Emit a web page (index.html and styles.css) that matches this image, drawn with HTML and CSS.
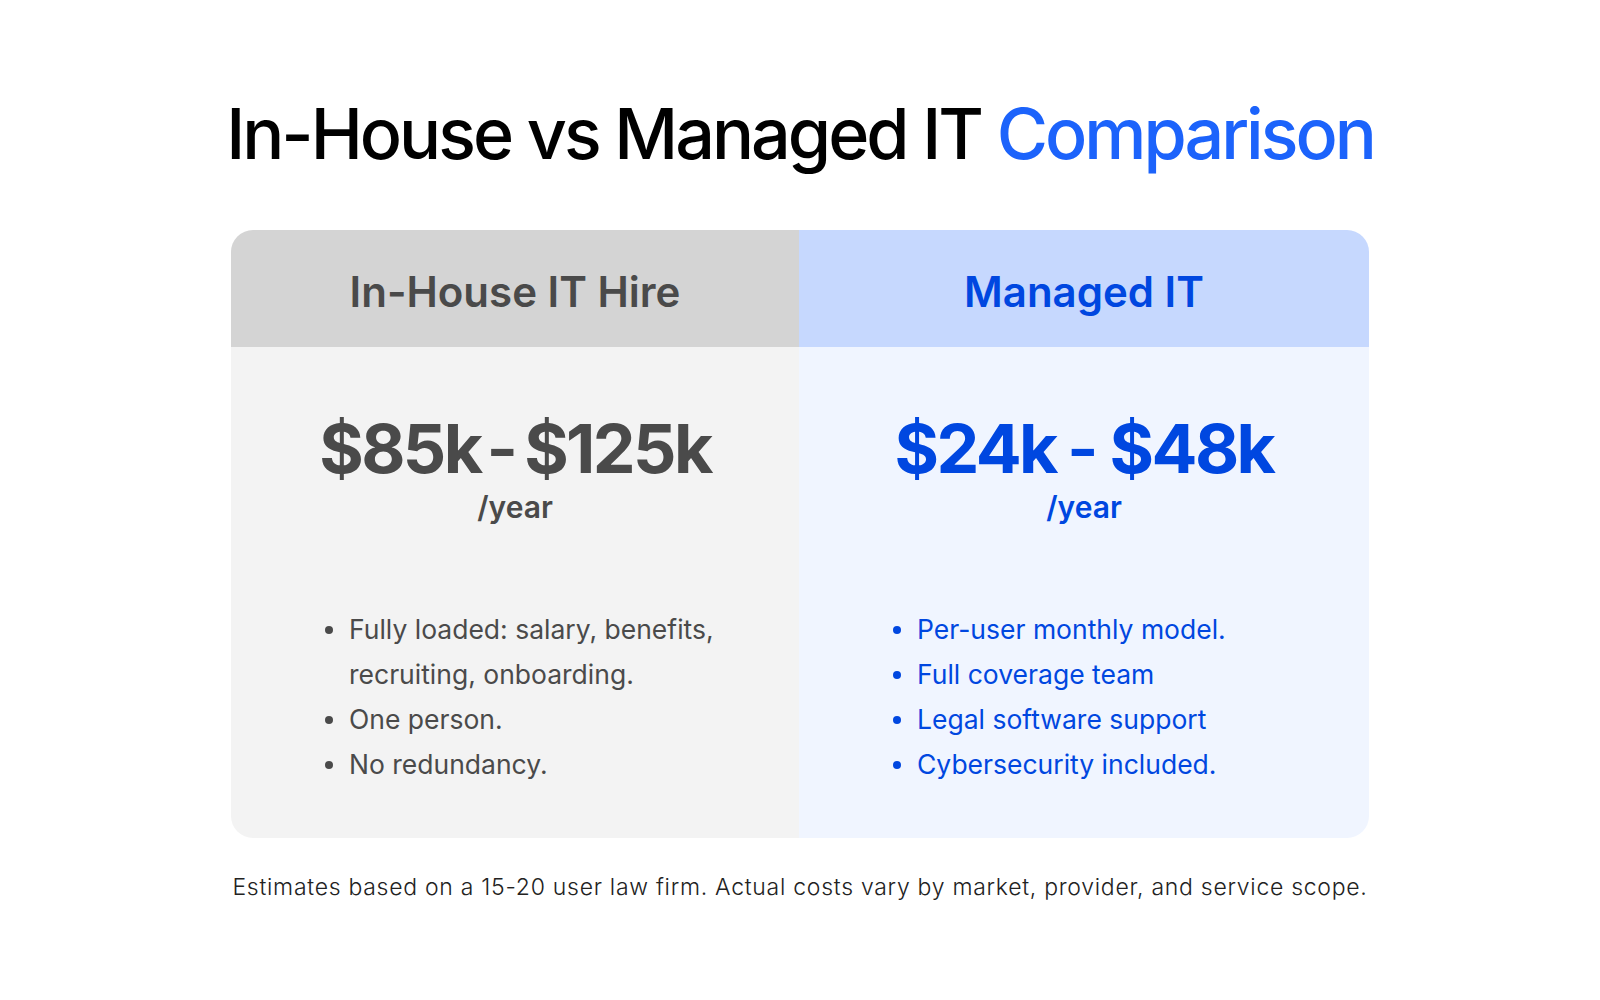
FILE: index.html
```html
<!DOCTYPE html>
<html lang="en">
<head>
<meta charset="utf-8">
<title>In-House vs Managed IT Comparison</title>
<link rel="stylesheet" href="styles.css">
</head>
<body>
<main class="page">
  <h1 class="title">In-House vs Managed IT <span class="accent">Comparison</span></h1>
  <section class="card">
    <div class="col col-inhouse">
      <div class="col-head">In-House IT Hire</div>
      <div class="col-body">
        <div class="price"><span>$85k</span><span class="dash">-</span><span>$125k</span></div>
        <div class="per">/year</div>
        <ul class="points">
          <li>Fully loaded: salary, benefits, recruiting, onboarding.</li>
          <li>One person.</li>
          <li>No redundancy.</li>
        </ul>
      </div>
    </div>
    <div class="col col-managed">
      <div class="col-head">Managed IT</div>
      <div class="col-body">
        <div class="price"><span>$24k</span><span class="dash">-</span><span>$48k</span></div>
        <div class="per">/year</div>
        <ul class="points">
          <li>Per-user monthly model.</li>
          <li>Full coverage team</li>
          <li>Legal software support</li>
          <li>Cybersecurity included.</li>
        </ul>
      </div>
    </div>
  </section>
  <p class="note">Estimates based on a 15-20 user law firm. Actual costs vary by market, provider, and service scope.</p>
</main>
</body>
</html>
```

FILE: styles.css
```css
* { box-sizing: border-box; }
html, body { margin: 0; padding: 0; background: #ffffff; }
body { font-family: "Inter", "Open Sans", sans-serif; color: #000; }

.page {
  width: 1600px;
  display: flex;
  flex-direction: column;
  align-items: center;
  padding-top: 91px;
}

.title {
  margin: 0;
  font-size: 70px;
  font-weight: 500;
  line-height: 86px;
  letter-spacing: -3px;
  color: #000;
}
.accent { color: #1c63fb; }

.card {
  margin-top: 53px;
  width: 1138px;
  display: grid;
  grid-template-columns: 568px 570px;
  border-radius: 22px;
  overflow: hidden;
}

.col-head {
  height: 117px;
  padding-top: 6px;
  display: flex;
  align-items: center;
  justify-content: center;
  font-size: 42px;
  font-weight: 600;
}
.col-body {
  padding: 62px 0 51px 98px;
  display: flex;
  flex-direction: column;
}

.col-inhouse .col-head { background: #d4d4d4; color: #4a4a4a; }
.col-inhouse .col-body { background: #f3f3f3; color: #4a4a4a; }
.col-managed .col-head { background: #c6d8fe; color: #0047e0; }
.col-managed .col-body { background: #f0f5ff; color: #0047e0; }

.price {
  margin-left: -98px;
  display: flex;
  justify-content: center;
  align-items: baseline;
  gap: 6px;
  font-size: 68px;
  font-weight: 700;
  line-height: 78px;
  letter-spacing: -2.6px;
}
.col-managed .price { gap: 11px; }
.dash { font-weight: 600; letter-spacing: 0; }

.per {
  margin-left: -98px;
  margin-top: 2px;
  text-align: center;
  font-size: 30px;
  font-weight: 600;
  line-height: 36px;
}

.points {
  margin: 82px 0 0 0;
  padding: 0;
  list-style: none;
  width: 420px;
  font-size: 26.5px;
  font-weight: 400;
  line-height: 45px;
}
.points li {
  position: relative;
  padding-left: 20px;
}
.points li::before {
  content: "";
  position: absolute;
  left: -4px;
  top: 19px;
  width: 8px;
  height: 8px;
  border-radius: 50%;
  background: currentColor;
}

.note {
  margin: 35px 0 0 0;
  font-size: 23px;
  font-weight: 300;
  letter-spacing: 0.72px;
  color: #222;
}
```
